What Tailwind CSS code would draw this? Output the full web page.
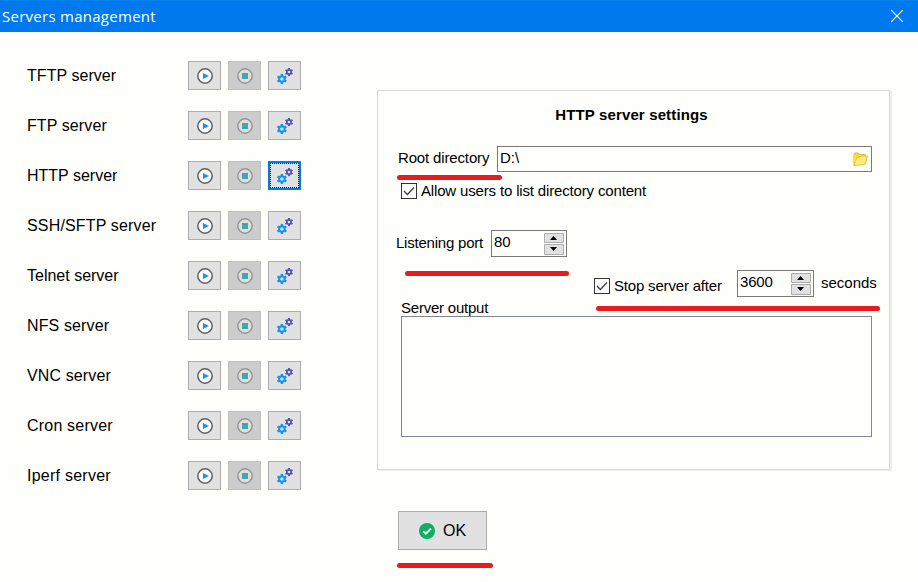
<!DOCTYPE html>
<html lang="en">
<head>
<meta charset="utf-8">
<title>Servers management</title>
<script src="https://cdn.jsdelivr.net/npm/@tailwindcss/browser@4"></script>
</head>
<body class="w-[918px] h-[582px] overflow-hidden bg-[#fefffb] text-black font-['Liberation_Sans',Arial,sans-serif]">
<svg class="hidden">
  <symbol id="play" viewBox="0 0 16 16">
    <circle cx="8" cy="8" r="7.2" fill="#fafafa" stroke="#606060" stroke-width="1.5"/>
    <path d="M6 5L12 8L6 11Z" fill="#1095fa"/>
  </symbol>
  <symbol id="stop" viewBox="0 0 16 16">
    <circle cx="8" cy="8" r="7.2" fill="#dededc" stroke="#979797" stroke-width="1.5"/>
    <rect x="5" y="5" width="6" height="6" fill="#46a5b0"/>
  </symbol>
  <symbol id="gear" viewBox="-6 -6 12 12">
    <path d="M0 -5.5V-2.5M0 5.5V2.5M-4.7 -2.7L-2.2 -1.25M4.7 2.7L2.2 1.25M-4.7 2.7L-2.2 1.25M4.7 -2.7L2.2 -1.25" stroke="currentColor" stroke-width="2.5" fill="none"/>
    <circle r="2.9" stroke="currentColor" stroke-width="2.2" fill="none"/>
  </symbol>
  <symbol id="gears" viewBox="0 0 16 16">
    <use href="#gear" x="-0.7" y="5.4" width="11.2" height="11.2" color="#1296f5"/>
    <use href="#gear" x="7.5" y="-0.5" width="9" height="9" color="#5350b5"/>
  </symbol>
  <symbol id="check" viewBox="0 0 16 16">
    <rect x=".5" y=".5" width="15" height="15" fill="#fff" stroke="#333"/>
    <path d="M3 8L6.3 11.5L13 4.5" stroke="#444" stroke-width="1.4" fill="none"/>
  </symbol>
  <symbol id="spin" viewBox="0 0 20 22">
    <path d="M.5 .5H19.5V9.5H.5ZM.5 11.5H19.5V21.5H.5Z" fill="#e1e1e1" stroke="#adadad"/>
    <path d="M6 7H13L9.5 3ZM6 14H13L9.5 18Z" fill="#000"/>
  </symbol>
</svg>

<header class="h-8 bg-[#0078ee] border-t border-[#0483ec] flex items-center justify-between pl-[2px] pr-[14px] text-white">
  <h1 class="font-['Open_Sans',sans-serif] text-[15px] leading-5 tracking-[0.27px] -mt-[2px]" id="title">Servers management</h1>
  <svg class="w-[14px] h-[14px] -mt-px" viewBox="0 0 14 14"><path d="M1.2 1.2L12.8 12.8M12.8 1.2L1.2 12.8" stroke="#fff" stroke-width="1.1"/></svg>
</header>

<main class="flex">
  <ul id="servers" class="w-[377px] pl-[27px] pt-[29px] flex flex-col gap-[21px] text-[16px]"></ul>

  <div class="pt-[58px]">
    <section class="w-[513px] h-[380px] border border-[#d9dad7] shadow-[2px_1px_0_#eff0ec]">
      <h2 class="text-center font-bold text-[15px] leading-[18px] pt-[15px] pr-[4px] tracking-[0.14px]">HTTP server settings</h2>
      <div class="flex mt-[22px] pl-5 text-[15px]">
        <label class="w-[99px] leading-[23px] whitespace-nowrap tracking-[-0.15px]">Root directory</label>
        <div class="w-[375px] h-[26px] border border-[#7a7a7a] pl-[2px] pr-[3px] flex items-center justify-between">
          <span class="leading-[22px] -mt-[2px]">D:\</span>
          <svg class="w-[15px] h-[15px]" viewBox="0 0 15 15">
            <path d="M1 13.5V2L2 1H5L6.2 2.3H12L12.5 4V6" fill="#f4dd35" stroke="#e0b53a"/>
            <path d="M1 13.6L3.6 5.5L7 5L8 4H14.4L12.5 12L7 13Z" fill="#faee78" stroke="#dfaf3c" stroke-width=".8"/>
            <path d="M2 2.5V10" stroke="#f8ed31" stroke-width="1.3"/>
          </svg>
        </div>
      </div>
      <div class="ml-[19px] mt-[3px] w-[105px] h-[5px] rounded-full bg-[#e81c1e]"></div>
      <div class="flex items-center mt-[3px] ml-[23px] h-4 text-[15px]">
        <svg class="w-4 h-4"><use href="#check"/></svg>
        <span class="ml-[4px] tracking-[-0.16px]">Allow users to list directory content</span>
      </div>
      <div class="flex mt-[31px] ml-[18px] text-[15px]">
        <label class="w-[95px] leading-[26px] whitespace-nowrap tracking-[-0.22px]">Listening port</label>
        <div class="w-[76px] h-[27px] border border-[#7a7a7a] pl-[2px] pr-[2px] flex items-center justify-between">
          <span class="leading-[20px] -mt-[4px] tracking-[-0.1px]">80</span><svg class="w-5 h-[22px]"><use href="#spin"/></svg>
        </div>
      </div>
      <div class="relative z-10 ml-[27px] mt-[14px] w-[164px] h-[5px] rounded-full bg-[#e81c1e]"></div>
      <div class="flex -mt-[6px] ml-[216px] h-[27px] items-center text-[15px]">
        <svg class="w-4 h-4 mt-[5px]"><use href="#check"/></svg>
        <label class="ml-1 w-[123px] mt-[5px] whitespace-nowrap tracking-[-0.18px]">Stop server after</label>
        <div class="w-[77px] h-[27px] border border-[#7a7a7a] pl-[2px] pr-[2px] flex items-center justify-between">
          <span class="leading-[20px] -mt-[4px] tracking-[-0.2px]">3600</span><svg class="w-5 h-[22px]"><use href="#spin"/></svg>
        </div>
        <span class="ml-[7px]">seconds</span>
      </div>
      <div class="flex justify-between ml-[23px] w-[479px] h-[19px] text-[15px]">
        <span class="leading-[22px] tracking-[-0.22px]">Server output</span>
        <div class="mt-[9px] w-[284px] h-[5px] rounded-full bg-[#e81c1e]"></div>
      </div>
      <div class="ml-[23px] w-[471px] h-[121px] border border-[#828790]"></div>
    </section>
    <button class="mt-[41px] ml-[21px] w-[89px] h-[39px] border border-[#adadad] bg-[#e1e1e1] flex items-center pl-5 text-[16px]">
      <svg class="w-4 h-4 mr-2" viewBox="0 0 16 16"><circle cx="8" cy="8" r="8" fill="#0eaf63"/><path d="M4.2 8.2L6.8 10.7L11.9 5.6" fill="none" stroke="#fff" stroke-width="1.8"/></svg>
      OK
    </button>
    <div class="ml-5 mt-[13px] w-24 h-[5px] rounded-full bg-[#e81c1e]"></div>
  </div>
</main>

<script>
  const servers = [
    ['TFTP', 'tracking-[0.05px]'], ['FTP', 'tracking-[0.1px]'], ['HTTP', 'tracking-normal'],
    ['SSH/SFTP', 'tracking-[0.16px]'], ['Telnet', 'tracking-normal'], ['NFS', 'tracking-[0.12px]'],
    ['VNC', 'tracking-[0.12px]'], ['Cron', 'tracking-[0.2px]'], ['Iperf', 'tracking-[0.25px]']
  ];
  document.getElementById('servers').innerHTML = servers.map(([n, tracking]) => `
    <li class="flex h-[29px]">
      <span class="w-[161px] leading-[29px] ${tracking}">${n} server</span>
      <span class="flex gap-[7px]">
        <button class="w-[33px] h-[29px] border border-[#adadad] bg-[#e1e1e1] flex items-center justify-center pt-px pl-px"><svg class="w-4 h-4"><use href="#play"/></svg></button>
        <button class="w-[33px] h-[29px] border border-[#bfbfbf] bg-[#cccccc] flex items-center justify-center pt-px pl-px"><svg class="w-4 h-4"><use href="#stop"/></svg></button>
        <button class="w-[33px] h-[29px] bg-[#e1e1e1] flex items-center justify-center pt-px pl-px ${n === 'HTTP' ? 'border-2 border-[#0078ee] outline-1 outline-dotted outline-black -outline-offset-3' : 'border border-[#adadad]'}"><svg class="w-4 h-4"><use href="#gears"/></svg></button>
      </span>
    </li>`).join('');
</script>
</body>
</html>
